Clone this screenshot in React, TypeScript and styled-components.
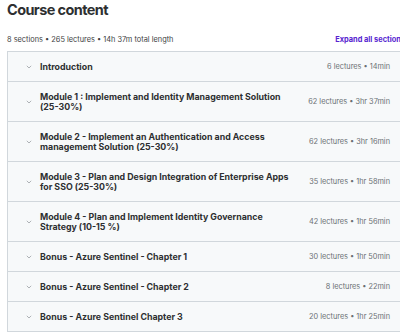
import styled, { createGlobalStyle } from "styled-components";

const GlobalStyle = createGlobalStyle`
  html, body {
    margin: 0;
    padding: 0;
    background: #ffffff;
    overflow: hidden;
  }
  body {
    font-family: Inter, "Noto Sans", sans-serif;
    color: #2d2f31;
  }
`;

const Page = styled.div`
  width: 398px;
  padding: 0 0 0 7px;
`;

const Title = styled.h2`
  margin: 0;
  padding-top: 1px;
  font-size: 14.5px;
  line-height: 18px;
  font-weight: 700;
  letter-spacing: -0.6px;
  color: #2d2f31;
`;

const SummaryBar = styled.div`
  display: flex;
  justify-content: space-between;
  align-items: center;
  margin-top: 15px;
  height: 10px;
  margin-bottom: 7px;
`;

const SummaryText = styled.span`
  font-size: 7.4px;
  color: #3e4143;
`;

const ExpandButton = styled.button`
  border: none;
  background: none;
  padding: 0;
  font-family: inherit;
  font-size: 7.4px;
  font-weight: 700;
  color: #5624d0;
  cursor: pointer;
  white-space: nowrap;
`;

const Panel = styled.div`
  border: 1px solid #d1d7dc;
  border-bottom: none;
`;

const Row = styled.div`
  display: flex;
  align-items: center;
  padding: 9.5px 14px 9.5px 18px;
  background: #f7f9fa;
  border-bottom: 1px solid #d1d7dc;
`;

const Chevron = styled.svg`
  flex-shrink: 0;
  width: 6px;
  height: 4px;
  margin-right: 8px;
`;

const SectionTitle = styled.div`
  flex: 1;
  font-size: 8.8px;
  line-height: 10px;
  font-weight: 700;
  color: #2d2f31;
  padding-right: 10px;
`;

const Meta = styled.span`
  flex-shrink: 0;
  font-size: 7.35px;
  line-height: 10px;
  color: #6a6f73;
`;

const sections = [
  { title: "Introduction", meta: "6 lectures • 14min" },
  {
    title: "Module 1 : Implement and Identity Management Solution (25-30%)",
    meta: "62 lectures • 3hr 37min",
  },
  {
    title:
      "Module 2 - Implement an Authentication and Access management Solution (25-30%)",
    meta: "62 lectures • 3hr 16min",
  },
  {
    title:
      "Module 3 - Plan and Design Integration of Enterprise Apps for SSO (25-30%)",
    meta: "35 lectures • 1hr 58min",
  },
  {
    title: "Module 4 - Plan and Implement Identity Governance Strategy (10-15 %)",
    meta: "42 lectures • 1hr 56min",
  },
  { title: "Bonus - Azure Sentinel - Chapter 1", meta: "30 lectures • 1hr 50min" },
  { title: "Bonus - Azure Sentinel - Chapter 2", meta: "8 lectures • 22min" },
  { title: "Bonus - Azure Sentinel Chapter 3", meta: "20 lectures • 1hr 25min" },
];

export default function App() {
  return (
    <>
      <GlobalStyle />
      <Page>
        <Title>Course content</Title>
        <SummaryBar>
          <SummaryText>
            8 sections • 265 lectures • 14h 37m total length
          </SummaryText>
          <ExpandButton>Expand all sections</ExpandButton>
        </SummaryBar>
        <Panel>
          {sections.map((s) => (
            <Row key={s.title}>
              <Chevron viewBox="0 0 6 4">
                <path
                  d="M0.8 0.8 L3 3 L5.2 0.8"
                  fill="none"
                  stroke="#9aa0a4"
                  strokeWidth="0.8"
                />
              </Chevron>
              <SectionTitle>{s.title}</SectionTitle>
              <Meta>{s.meta}</Meta>
            </Row>
          ))}
        </Panel>
      </Page>
    </>
  );
}
